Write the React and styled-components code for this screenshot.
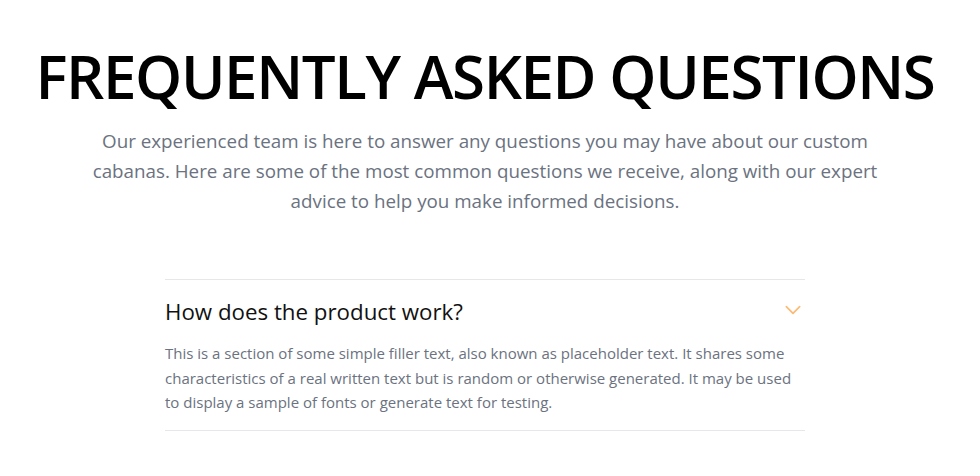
import React from "react";
import styled, { createGlobalStyle } from "styled-components";

const GlobalStyle = createGlobalStyle`
  * { box-sizing: border-box; }
  body {
    margin: 0;
    background: #ffffff;
    font-family: "Open Sans", "Noto Sans", sans-serif;
  }
`;

const Section = styled.section`
  padding: 40px 26px 0 16px;
  display: flex;
  flex-direction: column;
  align-items: center;
`;

const Title = styled.h1`
  margin: 0;
  font-size: 60px;
  font-weight: 600;
  letter-spacing: -1.4px;
  line-height: 1.2;
  color: #000;
  text-align: center;
  white-space: nowrap;
`;

const Lead = styled.p`
  margin: 14px 0 0;
  max-width: 800px;
  font-size: 18.8px;
  line-height: 30px;
  color: #6b7280;
  text-align: center;
`;

const List = styled.div`
  margin-top: 63px;
  width: 640px;
  border-top: 1px solid #e5e7eb;
`;

const Item = styled.div`
  border-bottom: 1px solid #e5e7eb;
  padding: 16px 0 15px;
`;

const Question = styled.button`
  all: unset;
  width: 100%;
  display: flex;
  align-items: center;
  justify-content: space-between;
  cursor: pointer;
  font-size: 22.3px;
  font-weight: 400;
  line-height: 32px;
  color: #111;
`;

const Chevron = styled.svg`
  width: 20px;
  height: 20px;
  flex-shrink: 0;
  margin-right: 2px;
  margin-top: -4px;
`;

const Answer = styled.p`
  margin: 13px 0 0;
  font-size: 15px;
  line-height: 24.5px;
  color: #6b7280;
`;

const faqs = [
  {
    q: "How does the product work?",
    a: "This is a section of some simple filler text, also known as placeholder text. It shares some characteristics of a real written text but is random or otherwise generated. It may be used to display a sample of fonts or generate text for testing.",
  },
];

export default function App() {
  return (
    <>
      <GlobalStyle />
      <Section>
        <Title>FREQUENTLY ASKED QUESTIONS</Title>
        <Lead>
          Our experienced team is here to answer any questions you may have about our custom
          cabanas. Here are some of the most common questions we receive, along with our expert
          advice to help you make informed decisions.
        </Lead>
        <List>
          {faqs.map((f) => (
            <Item key={f.q}>
              <Question>
                {f.q}
                <Chevron viewBox="0 0 24 24" fill="none" stroke="#fdba74" strokeWidth="2" strokeLinecap="round" strokeLinejoin="round">
                  <polyline points="4 8 12 16 20 8" />
                </Chevron>
              </Question>
              <Answer>{f.a}</Answer>
            </Item>
          ))}
        </List>
      </Section>
    </>
  );
}
